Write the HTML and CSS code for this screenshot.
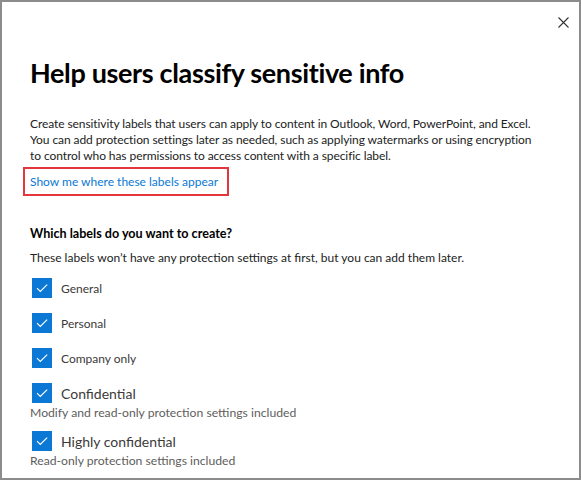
FILE: index.html
```html
<!DOCTYPE html>
<html>
<head>
<meta charset="utf-8">
<link rel="stylesheet" href="styles.css">
</head>
<body>
<div class="panel">
  <button class="close" aria-label="Close">
    <svg width="11" height="11" viewBox="0 0 11 11"><path d="M0.5 0.5L10.5 10.5M10.5 0.5L0.5 10.5" stroke="#333" stroke-width="1.1" fill="none"/></svg>
  </button>
  <h1 class="title">Help users classify sensitive info</h1>
  <p class="intro">Create sensitivity labels that users can apply to content in Outlook, Word, PowerPoint, and Excel. You can add protection settings later as needed, such as applying watermarks or using encryption to control who has permissions to access content with a specific label.</p>
  <div class="link-box"><a class="link" href="#">Show me where these labels appear</a></div>
  <h2 class="question">Which labels do you want to create?</h2>
  <p class="hint">These labels won’t have any protection settings at first, but you can add them later.</p>
  <ul class="labels">
    <li class="item"><span class="check"><svg width="20" height="20" viewBox="0 0 20 20"><path d="M5 10.2L8.3 13.5L15.2 6.6" stroke="#fff" stroke-width="1.2" fill="none"/></svg></span><span class="name">General</span></li>
    <li class="item"><span class="check"><svg width="20" height="20" viewBox="0 0 20 20"><path d="M5 10.2L8.3 13.5L15.2 6.6" stroke="#fff" stroke-width="1.2" fill="none"/></svg></span><span class="name">Personal</span></li>
    <li class="item"><span class="check"><svg width="20" height="20" viewBox="0 0 20 20"><path d="M5 10.2L8.3 13.5L15.2 6.6" stroke="#fff" stroke-width="1.2" fill="none"/></svg></span><span class="name">Company only</span></li>
    <li class="item big"><span class="check"><svg width="20" height="20" viewBox="0 0 20 20"><path d="M5 10.2L8.3 13.5L15.2 6.6" stroke="#fff" stroke-width="1.2" fill="none"/></svg></span><span class="name">Confidential</span></li>
    <li class="sub">Modify and read-only protection settings included</li>
    <li class="item big"><span class="check"><svg width="20" height="20" viewBox="0 0 20 20"><path d="M5 10.2L8.3 13.5L15.2 6.6" stroke="#fff" stroke-width="1.2" fill="none"/></svg></span><span class="name">Highly confidential</span></li>
    <li class="sub">Read-only protection settings included</li>
  </ul>
</div>
</body>
</html>
```
FILE: styles.css
```css
html, body { margin: 0; padding: 0; background: #fff; }
body { font-family: Lato, "Open Sans", sans-serif; color: #323130; }
.panel {
  box-sizing: border-box;
  width: 581px; height: 480px;
  border: 2px solid #8c8c8c;
  padding: 0 28px 0 28px;
  position: relative;
  overflow: hidden;
}
.close {
  position: absolute; top: 15px; right: 10px;
  border: 0; background: none; padding: 0; width: 11px; height: 11px;
  display: flex;
}
.title {
  margin: 55px 0 0 0;
  font-size: 27px; font-weight: 700; color: #000;
  line-height: 32px; letter-spacing: -0.35px;
}
.intro {
  margin: 27px 0 0 0;
  max-width: 508px;
  font-size: 12px; line-height: 16px; color: #222;
  letter-spacing: -0.08px;
}
.link-box {
  margin: 3px 0 0 -7px;
  width: 206px; height: 29px;
  border: 2px solid #e3373d;
  box-sizing: border-box;
  display: flex; align-items: center;
  padding-left: 5px;
  white-space: nowrap;
}
.link { color: #0a78d4; font-size: 12px; text-decoration: none; }
.question { margin: 30px 0 0 0; font-size: 12.6px; font-weight: 700; color: #000; line-height: 16px; }
.hint { margin: 8px 0 0 0; font-size: 12px; line-height: 16px; color: #222; }
.labels { list-style: none; margin: 12px 0 0 2px; padding: 0; }
.item { display: flex; align-items: center; gap: 9px; height: 20px; margin-bottom: 15px; }
.item.big { margin-bottom: 0; }
.check { width: 20px; height: 20px; background: #0a78d4; display: flex; }
.name { font-size: 12px; color: #3b3a39; }
.big .name { font-size: 14px; }
.sub { font-size: 12.2px; color: #605e5c; line-height: 16px; margin: 2px 0 10px -2px; }
```
